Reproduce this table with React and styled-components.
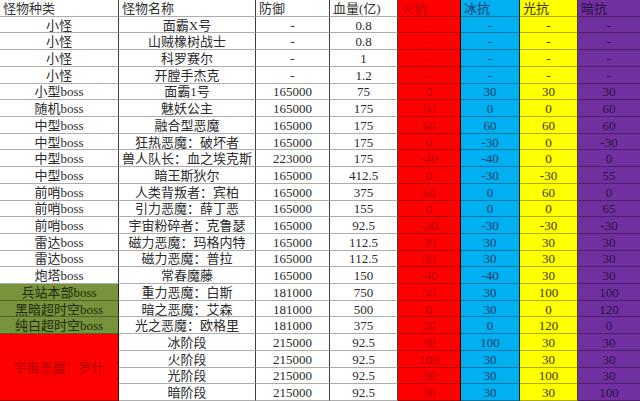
import React from "react";
import styled, { createGlobalStyle } from "styled-components";

const GlobalStyle = createGlobalStyle`
  html, body {
    margin: 0;
    padding: 0;
    background: #ffffff;
  }
  * {
    box-sizing: border-box;
  }
`;

const Sheet = styled.div`
  display: grid;
  grid-template-columns: 119px 137px 74px 68px 63px 59px 58px 62px;
  grid-template-rows: repeat(24, 1fr);
  width: 640px;
  height: 401px;
  font-family: "Liberation Serif", "Noto Sans CJK SC", serif;
  font-size: 13px;
  color: #2b2b2b;
`;

const Cell = styled.div`
  display: flex;
  align-items: center;
  justify-content: ${(p) => (p.$head ? "flex-start" : "center")};
  padding: ${(p) => (p.$head ? "1px 0 0 3px" : "1px 0 0 0")};
  background: ${(p) => p.$bg || "#ffffff"};
  color: ${(p) => p.$fg || "#2b2b2b"};
  border-bottom: 1px solid rgba(0, 0, 0, 0.32);
  border-right: ${(p) => (p.$last ? "none" : "1px solid rgba(0, 0, 0, 0.75)")};
  grid-row: ${(p) => (p.$span ? `span ${p.$span}` : "auto")};
  white-space: nowrap;
  overflow: hidden;
  line-height: 1;
`;

const RES = [
  { bg: "#ff0000", fg: "#b80000" },
  { bg: "#00b0f0", fg: "#1d3a66" },
  { bg: "#ffff00", fg: "#3a3500" },
  { bg: "#7030a0", fg: "#2a1244" },
];

const GREEN = { bg: "#77933c", fg: "#1c2a0c" };

const header = ["怪物种类", "怪物名称", "防御", "血量(亿)", "火抗", "冰抗", "光抗", "暗抗"];

const rows = [
  ["小怪", "面霸X号", "-", "0.8", "-", "-", "-", "-"],
  ["小怪", "山贼橡树战士", "-", "0.8", "-", "-", "-", "-"],
  ["小怪", "科罗赛尔", "-", "1", "-", "-", "-", "-"],
  ["小怪", "开膛手杰克", "-", "1.2", "-", "-", "-", "-"],
  ["小型boss", "面霸1号", "165000", "75", "0", "30", "30", "30"],
  ["随机boss", "魅妖公主", "165000", "175", "60", "0", "0", "60"],
  ["中型boss", "融合型恶魔", "165000", "175", "60", "60", "60", "60"],
  ["中型boss", "狂热恶魔：破坏者", "165000", "175", "0", "-30", "0", "-30"],
  ["中型boss", "兽人队长：血之埃克斯", "223000", "175", "-40", "-40", "0", "0"],
  ["中型boss", "暗王斯狄尔", "165000", "412.5", "0", "-30", "-30", "55"],
  ["前哨boss", "人类背叛者：宾柏", "165000", "375", "60", "0", "60", "0"],
  ["前哨boss", "引力恶魔：薛丁恶", "165000", "155", "0", "0", "0", "65"],
  ["前哨boss", "宇宙粉碎者：克鲁瑟", "165000", "92.5", "-30", "-30", "-30", "-30"],
  ["雷达boss", "磁力恶魔：玛格内特", "165000", "112.5", "30", "30", "30", "30"],
  ["雷达boss", "磁力恶魔：普拉", "165000", "112.5", "30", "30", "30", "30"],
  ["炮塔boss", "常春魔藤", "165000", "150", "-40", "-40", "30", "30"],
  ["兵站本部boss", "重力恶魔：白斯", "181000", "750", "30", "30", "100", "100", { green: true }],
  ["黑暗超时空boss", "暗之恶魔：艾森", "181000", "500", "0", "30", "0", "120", { green: true }],
  ["纯白超时空boss", "光之恶魔：欧格里", "181000", "375", "30", "0", "120", "0", { green: true }],
  ["宇宙恶魔：罗什", "冰阶段", "215000", "92.5", "30", "100", "30", "30", { merge: 4 }],
  [null, "火阶段", "215000", "92.5", "100", "30", "30", "30"],
  [null, "光阶段", "215000", "92.5", "30", "30", "100", "30"],
  [null, "暗阶段", "215000", "92.5", "30", "30", "30", "100"],
];

function Row({ data }) {
  const opts = typeof data[8] === "object" ? data[8] : {};
  const [kind, ...rest] = data.slice(0, 8);
  return (
    <>
      {kind !== null &&
        (opts.merge ? (
          <Cell $span={opts.merge} $bg="#ff0000" $fg="#b00000">
            {kind}
          </Cell>
        ) : opts.green ? (
          <Cell $bg={GREEN.bg} $fg={GREEN.fg}>
            {kind}
          </Cell>
        ) : (
          <Cell>{kind}</Cell>
        ))}
      <Cell>{rest[0]}</Cell>
      <Cell>{rest[1]}</Cell>
      <Cell>{rest[2]}</Cell>
      {rest.slice(3).map((v, i) => (
        <Cell key={i} $bg={RES[i].bg} $fg={RES[i].fg} $last={i === 3}>
          {v}
        </Cell>
      ))}
    </>
  );
}

export default function App() {
  return (
    <>
      <GlobalStyle />
      <Sheet>
        {header.map((h, i) => (
          <Cell
            key={h}
            $head
            $bg={i >= 4 ? RES[i - 4].bg : undefined}
            $fg={i >= 4 ? RES[i - 4].fg : "#333"}
            $last={i === 7}
          >
            {h}
          </Cell>
        ))}
        {rows.map((r, i) => (
          <Row key={i} data={r} />
        ))}
      </Sheet>
    </>
  );
}
